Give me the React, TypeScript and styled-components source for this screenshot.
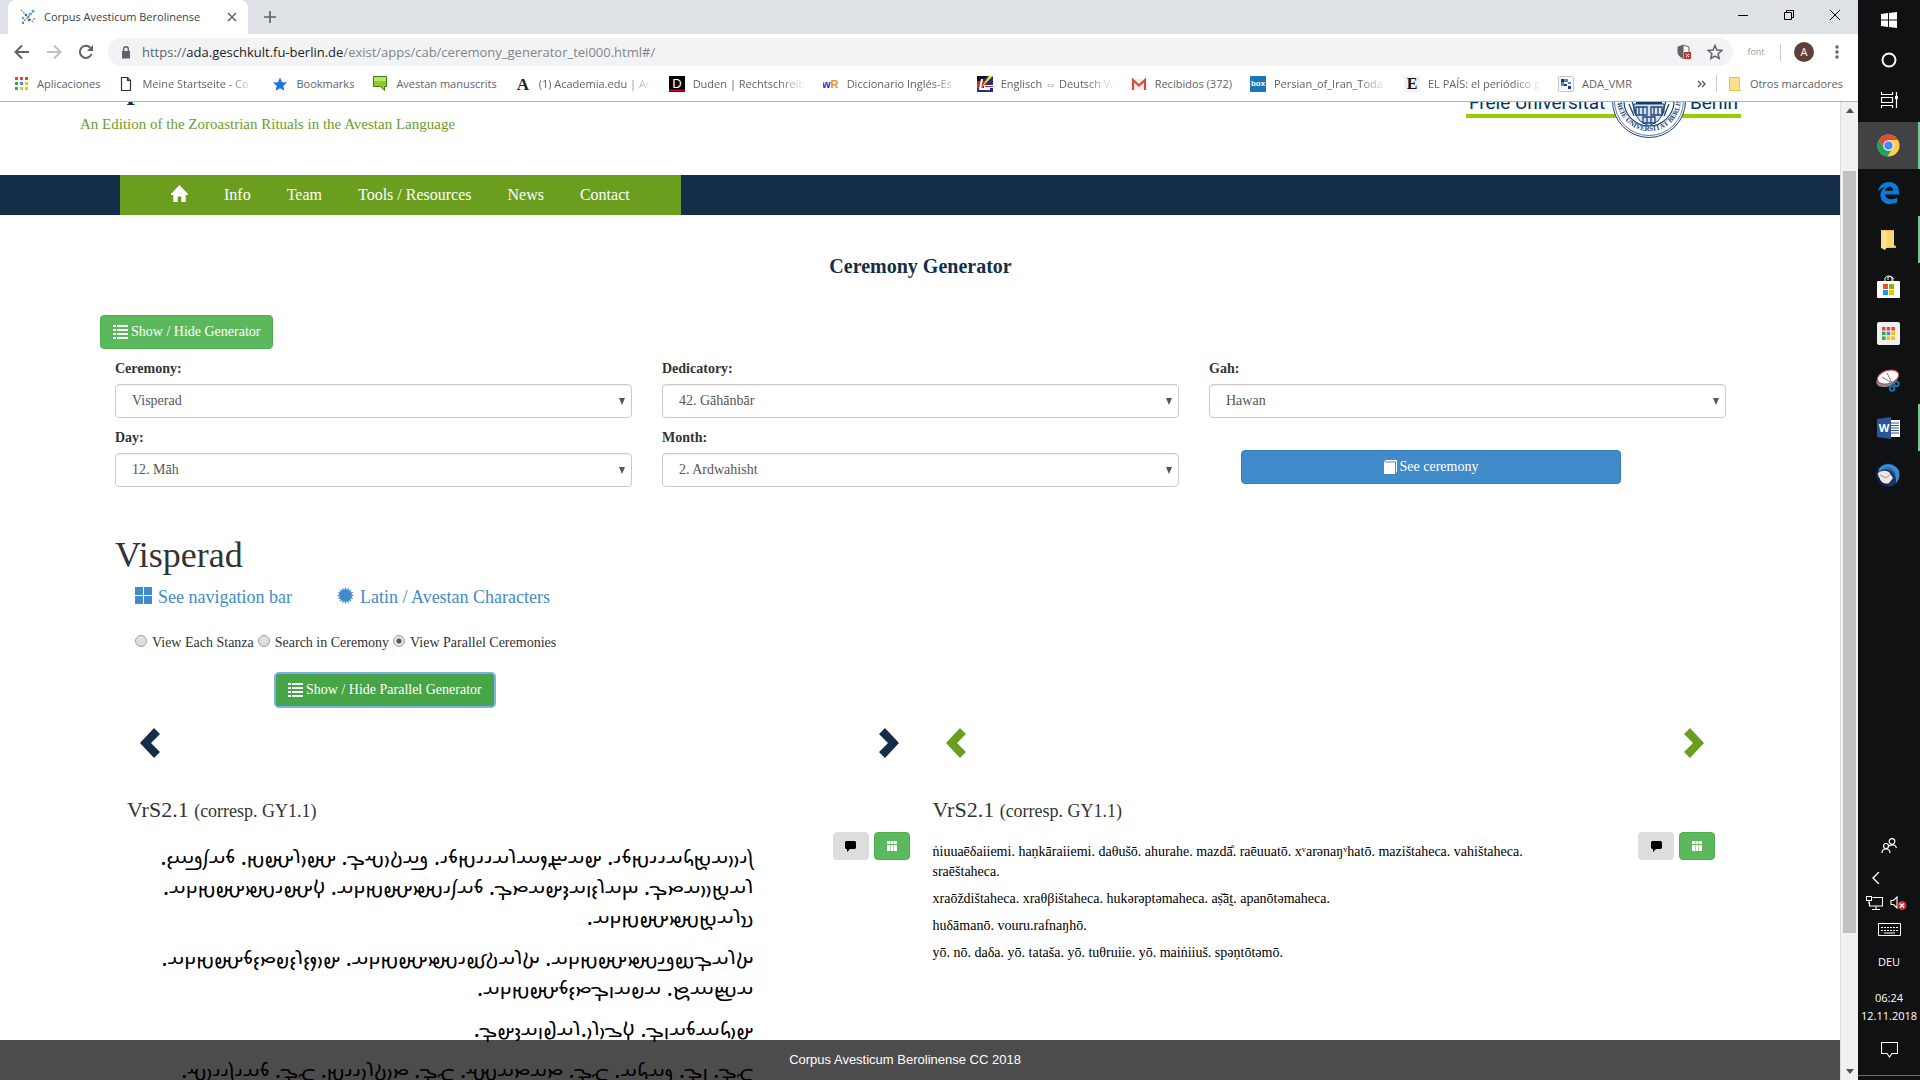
import React from 'react';
import styled, { createGlobalStyle, css } from 'styled-components';

const serif = '"Liberation Serif", "Times New Roman", serif';
const ui = '"Open Sans", "Noto Sans", sans-serif';
const navy = '#142e4a';
const leaf = '#6b9e1f';

const GlobalStyle = createGlobalStyle`
  *, *::before, *::after { box-sizing: border-box; }
  html, body { margin: 0; padding: 0; overflow: hidden; }
  body { font-family: ${serif}; font-size: 14px; line-height: 20px; color: #333; background: #fff; }
  button { font: inherit; margin: 0; cursor: pointer; }
  a { text-decoration: none; }
  svg { display: block; flex: none; }
`;

/* ---------- shell ---------- */

const Desktop = styled.div`
  display: flex;
  height: 100vh;
`;

const Browser = styled.div`
  flex: 1;
  min-width: 0;
  display: flex;
  flex-direction: column;
  font-family: ${ui};
`;

const TabStrip = styled.div`
  display: flex;
  align-items: stretch;
  height: 34px;
  padding-left: 8px;
  background: #dee1e6;
`;

const Tab = styled.div`
  display: flex;
  align-items: center;
  width: 240px;
  padding: 0 10px 0 12px;
  gap: 8px;
  background: #fff;
  border-radius: 8px 8px 0 0;
  font-size: 11px;
  color: #3c4043;
  white-space: nowrap;
  span { flex: 1; }
`;

const BareButton = styled.button`
  display: flex;
  align-items: center;
  justify-content: center;
  padding: 0;
  border: 0;
  background: transparent;
  color: #5f6368;
`;

const NewTab = styled(BareButton)`
  width: 28px;
  margin-left: 8px;
`;

const WindowControls = styled.div`
  display: flex;
  margin-left: auto;
  height: 29px;
  button { width: 46px; color: #000; }
`;

const Toolbar = styled.div`
  display: flex;
  align-items: center;
  height: 36px;
  padding: 0 8px 0 6px;
  background: #fff;
`;

const ToolButton = styled(BareButton)`
  width: 32px;
  height: 28px;
`;

const AddressBar = styled.div`
  flex: 1;
  display: flex;
  align-items: center;
  height: 28px;
  margin: 0 13px 0 6px;
  padding: 0 10px 0 13px;
  gap: 11px;
  border-radius: 14px;
  background: #f1f3f4;
  svg:last-child { margin-left: 4px; }
`;

const Url = styled.a`
  flex: 1;
  font-size: 13px;
  color: #80868b;
  b { font-weight: 400; color: #202124; }
  i { font-style: normal; color: #5f6368; }
`;

const FontBadge = styled.span`
  width: 20px;
  font-size: 9px;
  text-align: center;
  color: #9a9a9a;
`;

const Rule = styled.span`
  width: 1px;
  height: 17px;
  background: #c9cbce;
`;

const Avatar = styled.button`
  width: 20px;
  height: 20px;
  padding: 0;
  border: 0;
  border-radius: 50%;
  background: #5d4037;
  color: #fff;
  font-size: 11px;
  line-height: 20px;
`;

const BookmarkBar = styled.nav`
  display: flex;
  align-items: center;
  height: 32px;
  padding: 0 15px 4px 13px;
  border-bottom: 1px solid #b3b3b5;
  background: #fff;
`;

const Bookmark = styled.a<{ $cut?: boolean }>`
  flex: none;
  display: flex;
  align-items: center;
  gap: 8px;
  margin-right: ${p => (p.$cut ? 17 : 18)}px;
  font-size: 11px;
  color: #5f6368;
  white-space: nowrap;
  ${p => p.$cut && css`
    span {
      overflow: hidden;
      width: 113px;
      mask-image: linear-gradient(to right, #000 86px, transparent 113px);
    }
  `}
`;

const BarEnd = styled.div`
  display: flex;
  align-items: center;
  margin-left: auto;
  gap: 9px;
  a { margin: 0; }
`;

const Viewport = styled.div`
  flex: 1;
  min-height: 0;
  display: flex;
`;

const ScrollTrack = styled.div`
  display: flex;
  flex-direction: column;
  align-items: center;
  justify-content: space-between;
  width: 18px;
  padding: 6px 0;
  border-left: 1px solid #dcdcdc;
  background: #f1f1f1;
`;

const ScrollThumb = styled.div`
  flex: 0 1 762px;
  width: 13px;
  margin: 58px 0 auto;
  background: #c1c1c1;
`;

/* ---------- web page ---------- */

const Page = styled.div`
  position: relative;
  flex: 1;
  min-width: 0;
  overflow: hidden;
  font-family: ${serif};
  background: #fff;
`;

const Masthead = styled.header`
  display: flex;
  justify-content: space-between;
  height: 103px;
  margin-top: -30px;
  padding: 0 99px 0 80px;
`;

const SiteTitle = styled.h1`
  margin: 0;
  font-size: 28px;
  font-weight: 700;
  line-height: 36px;
  color: ${navy};
`;

const Tagline = styled.p`
  margin: 6px 0 0;
  font-size: 15px;
  color: ${leaf};
`;

const Sponsor = styled.div`
  display: flex;
  justify-content: space-between;
  position: relative;
  width: 275px;
  height: 46px;
  padding: 16px 3px 0;
  border-bottom: 4px solid #99cc00;
  font-family: Roboto, ${ui};
  font-size: 19px;
  line-height: 30px;
  color: #003366;
  svg { position: absolute; left: 146px; top: -8px; }
`;

const SiteNav = styled.nav`
  padding-left: 120px;
  background: ${navy};
`;

const NavList = styled.div`
  display: flex;
  align-items: center;
  width: max-content;
  height: 40px;
  padding: 0 51px;
  gap: 36px;
  background: ${leaf};
  font-size: 16px;
  a { color: #fff; }
  svg { margin-top: -4px; }
`;

const Main = styled.main`
  padding: 40px 99px 0 100px;
`;

const PageTitle = styled.h2`
  margin: 0 0 38px;
  font-size: 20px;
  line-height: 22px;
  text-align: center;
  color: ${navy};
`;

const tones = {
  green: css`background: #5cb85c; border-color: #4cae4c; color: #fff;`,
  pressed: css`background: #47a447; border-color: #398439; color: #fff; outline: 2px solid #7aaef0; outline-offset: -1px;`,
  blue: css`background: #428bca; border-color: #357ebd; color: #fff;`,
  grey: css`background: #ddd; border-color: #ddd; color: #000;`,
};

const Button = styled.button<{ $tone: keyof typeof tones; $small?: boolean }>`
  display: inline-flex;
  align-items: center;
  justify-content: center;
  gap: 3px;
  height: ${p => (p.$small ? 28 : 34)}px;
  padding: 0 12px;
  border: 1px solid;
  border-radius: 4px;
  ${p => tones[p.$tone]}
`;

const Generator = styled.form`
  display: grid;
  grid-template-columns: repeat(3, 1fr);
  gap: 10px 30px;
  padding: 10px 15px 0;
`;

const Field = styled.div`
  display: grid;
  gap: 5px;
  label { font-weight: 700; }
`;

const SelectBox = styled.div`
  display: grid;
  align-items: center;
  > * { grid-area: 1 / 1; }
  svg { justify-self: end; margin-right: 7px; pointer-events: none; }
`;

const Select = styled.select`
  appearance: none;
  width: 100%;
  height: 34px;
  padding: 0 16px;
  border: 1px solid #ccc;
  border-radius: 4px;
  background: #fff;
  box-shadow: inset 0 1px 1px rgba(0, 0, 0, 0.075);
  font: inherit;
  color: #555;
`;

const SubmitCell = styled.div`
  padding: 22px 105px 0 32px;
  button { width: 100%; }
`;

const CeremonyName = styled.h1`
  margin: 48px 0 12px;
  font-size: 36px;
  font-weight: 400;
  line-height: 40px;
`;

const Ceremony = styled.section`
  padding-left: 15px;
`;

const ViewLinks = styled.div`
  display: flex;
  gap: 45px;
  padding-left: 20px;
  font-size: 18px;
  a { display: flex; align-items: center; gap: 6px; color: #428bca; }
  svg { margin-top: -3px; }
`;

const Modes = styled.div`
  display: flex;
  align-items: center;
  gap: 4px;
  padding: 26px 0 20px 20px;
  label { margin-left: 1px; }
`;

const Radio = styled.input`
  appearance: none;
  width: 12px;
  height: 12px;
  margin: 0 0 4px;
  border: 1px solid #a2a2a2;
  border-radius: 50%;
  background: linear-gradient(#e4e4e4, #dadada);
  &:checked { background: radial-gradient(circle, #555 0 2px, #e2e2e2 3px); }
`;

const ParallelToggle = styled.div`
  padding-left: 160px;
`;

const Parallel = styled.div`
  display: grid;
  grid-template-columns: 1fr 1fr;
  gap: 23px;
  padding: 21px 26px 0 27px;
`;

const Arrows = styled.div<{ $color: string }>`
  display: flex;
  justify-content: space-between;
  padding: 0 11px 0 13px;
  button { color: ${p => p.$color}; }
`;

const StanzaTitle = styled.h3`
  margin: 40px 0 9px;
  font-size: 22px;
  font-weight: 400;
  line-height: 24px;
  small { font-size: 18px; }
`;

const StanzaBody = styled.div`
  display: flex;
  align-items: flex-start;
  gap: 5px;
  button { width: 36px; padding: 0; }
`;

const Stanza = styled.div<{ $avestan?: boolean }>`
  flex: 1;
  min-width: 0;
  padding-top: 10px;
  margin-right: 74px;
  color: #000;
  p { margin: 0 0 7px; }
  ${p => p.$avestan && css`
    direction: rtl;
    font-family: "Noto Sans Avestan", "Ahuramazda", ${serif};
    font-size: 21px;
    line-height: 30px;
    white-space: nowrap;
    p { margin: 0 0 11px; }
  `}
`;

const Footer = styled.footer`
  position: absolute;
  left: 0;
  right: 0;
  bottom: 0;
  height: 40px;
  padding-right: 30px;
  background: rgba(0, 0, 0, 0.7);
  font-family: "Liberation Sans", Arial, sans-serif;
  font-size: 13px;
  line-height: 40px;
  text-align: center;
  color: #fff;
`;

/* ---------- windows taskbar ---------- */

const Taskbar = styled.aside`
  display: flex;
  flex-direction: column;
  width: 62px;
  background: #101113;
  color: #fff;
  font-family: ${ui};
  font-size: 11px;
  line-height: 18px;
  text-align: center;
`;

const SystemButton = styled(BareButton)`
  height: 40px;
  color: #fff;
`;

const AppButton = styled(BareButton)<{ $active?: boolean; $open?: boolean }>`
  height: 47px;
  background: ${p => (p.$active ? '#404244' : 'transparent')};
  border-right: 2px solid ${p => (p.$open ? '#76c893' : 'transparent')};
`;

const Apps = styled.div`
  display: grid;
  padding-top: 2px;
`;

const Tray = styled.div`
  display: flex;
  flex-direction: column;
  align-items: center;
  margin-top: auto;
  padding-bottom: 4px;
`;

const TrayRow = styled.div<{ $h: number; $left?: boolean }>`
  display: flex;
  align-items: center;
  justify-content: center;
  width: 100%;
  height: ${p => p.$h}px;
  padding-right: ${p => (p.$left ? 5 : 0)}px;
  gap: 7px;
`;

const Clock = styled.time`
  padding-top: 11px;
`;

const ShowDesktop = styled.div`
  width: 100%;
  border-top: 1px solid #6d6e70;
`;

/* ---------- icons ---------- */

type P = { w?: number; h?: number; vb?: string; children?: React.ReactNode };
const Svg = ({ w = 16, h, vb, children }: P) => (
  <svg width={w} height={h ?? w} viewBox={vb ?? `0 0 ${w} ${h ?? w}`} aria-hidden="true">{children}</svg>
);
const stroke = (width: number) => ({ fill: 'none', stroke: 'currentColor', strokeWidth: width });

const ListIcon = () => (
  <Svg w={15} h={14}>
    <path fill="currentColor" d="M0 0h3v2H0zM4 0h11v2H4zM0 4h3v2H0zM4 4h11v2H4zM0 8h3v2H0zM4 8h11v2H4zM0 12h3v2H0zM4 12h11v2H4z" />
  </Svg>
);
const HomeIcon = () => (
  <Svg w={17} h={17}><path fill="currentColor" d="M8.500 0 17 9v1h-2.300v7h-4.400v-5.500H6.700V17H2.300v-7H0V9z" /></Svg>
);
const BookIcon = () => (
  <Svg w={13} h={14}>
    <path fill="currentColor" d="M2 0h10.500c.300 0 .500.200.500.500V12l-1 1V1.500H1.500L1 2.500h10V14H.500A.500.500 0 0 1 0 13.500V2z" />
  </Svg>
);
const WindowsGridIcon = () => (
  <Svg w={17} h={17}><path fill="currentColor" d="M0 0h8v8H0zM9 0h8v8H9zM0 9h8v8H0zM9 9h8v8H9z" /></Svg>
);
const burst = Array.from({ length: 32 }, (_, i) => {
  const r = i % 2 ? 5.8 : 8.5;
  const a = (i * Math.PI) / 16;
  return `${(8.5 + r * Math.sin(a)).toFixed(2)},${(8.5 - r * Math.cos(a)).toFixed(2)}`;
}).join(' ');
const BurstIcon = () => <Svg w={17} h={17}><polygon fill="currentColor" points={burst} /></Svg>;
const Chevron = ({ right }: { right?: boolean }) => (
  <Svg w={20} h={30}>
    <path fill="currentColor" d={right ? 'M6 0 20 15 6 30 0 24 9 15 0 6z' : 'M14 0 20 6 11 15 20 24 14 30 0 15z'} />
  </Svg>
);
const CommentIcon = () => (
  <Svg w={11} h={11}><path fill="currentColor" d="M1 0h9l1 1v6L10 8H5L2 11V8H1L0 7V1z" /></Svg>
);
const TableIcon = () => (
  <Svg w={10} h={10}><path fill="currentColor" d="M0 0h3v3H0zM3.500 0h3v3h-3zM7 0h3v3H7zM0 4h3v6H0zM3.500 4h3v6h-3zM7 4h3v6H7z" /></Svg>
);
const Caret = () => <Svg w={6} h={7}><path fill="#555" d="M0 0h6L3 7z" /></Svg>;

const Favicon = () => (
  <Svg>
    <g stroke="#7b8086" strokeWidth="1.200" strokeDasharray="2 1"><path d="M1 1l13 13M14 2 2 14" /></g>
    <g fill="#4aa8e0"><circle cx="13" cy="2" r="1.500" /><circle cx="3" cy="9" r="1.300" /><circle cx="10" cy="5" r="1.300" /><circle cx="14" cy="10" r="1" /></g>
    <g fill="#5f6368"><circle cx="6" cy="6" r="1.300" /><circle cx="9" cy="11" r="1.300" /><circle cx="3" cy="14" r="1" /></g>
  </Svg>
);
const gridColors = ['#ea4335', '#ea4335', '#ea4335', '#34a853', '#4285f4', '#fbbc04', '#34a853', '#fbbc04', '#fbbc04'];
const GoogleGrid = ({ s = 3, step = 5 }: { s?: number; step?: number }) => (
  <>{gridColors.map((c, i) => <rect key={i} x={(i % 3) * step} y={Math.floor(i / 3) * step} width={s} height={s} fill={c} />)}</>
);
const TileText = ({ bg, fg, t, size, font = 'Liberation Sans', y = 12 }: { bg: string; fg: string; t: string; size: number; font?: string; y?: number }) => (
  <Svg>
    <rect width="16" height="16" rx="1" fill={bg} />
    <text x="8" y={y} fontSize={size} fontWeight="700" fontFamily={font} textAnchor="middle" fill={fg}>{t}</text>
  </Svg>
);

const Seal = () => (
  <Svg w={74} h={74} vb="0 0 74 74">
    <circle cx="37" cy="37" r="36.500" fill="#fff" stroke="#1c4478" />
    <circle cx="37" cy="37" r="34.500" fill="none" stroke="#1c4478" strokeWidth=".7" />
    <circle cx="37" cy="37" r="25" fill="#fff" stroke="#1c4478" strokeWidth="1.200" />
    <path id="sealArc" d="M5 35a32 32 0 0 0 64 0" fill="none" />
    <text fontSize="7" fontFamily="Liberation Serif" fontWeight="700" fill="#1c4478">
      <textPath href="#sealArc" startOffset="50%" textAnchor="middle">FREIE UNIVERSITÄT BERLIN</textPath>
    </text>
    <path d="M24 32h26v9H24z" fill="#0e3567" />
    <path d="M22 40h30v8l-6 9-9 5-9-5-6-9z" fill="#d7e0ec" stroke="#1c4478" />
    <g fill="none" stroke="#1c4478" strokeWidth="1.300">
      <path d="M24 43h11v8H24zM39 43h11v8H39zM31 53h12v6H31zM27 43v8M31 43v8M42 43v8M46 43v8M35 53v6M39 53v6M17 40l5 12M20 37l4 14M57 40l-5 12M54 37l-4 14" />
    </g>
  </Svg>
);

/* ---------- Avestan script ---------- */

const LETTERS = [
  'a', 'ā', 'å', 'ā̊', 'ą', 'ą̇', 'ə', 'ə̄', 'e', 'ē', 'o', 'ō', 'i', 'ī', 'u', 'ū', 'k', 'x', 'x́', 'xᵛ', 'g', 'ġ', 'γ',
  'c', 'j', 't', 'θ', 'd', 'δ', 't̰', 'p', 'f', 'b', 'β', 'ŋ', 'ŋ́', 'ŋᵛ', 'n', 'ń', 'ṇ', 'm', 'm̨', 'ẏ', 'y', 'v', 'r', 'l',
  's', 'z', 'š', 'ž', 'š́', 'ṣ̌', 'h',
];
const BY_LENGTH = LETTERS.map((l, i) => [l, String.fromCodePoint(0x10b00 + i)] as const)
  .sort((a, b) => b[0].length - a[0].length);

const toAvestan = (latin: string) => {
  let rest = latin;
  let out = '';
  while (rest) {
    const hit = BY_LENGTH.find(([l]) => rest.startsWith(l));
    out += hit ? hit[1] : rest[0];
    rest = rest.slice(hit ? hit[0].length : 1);
  }
  return out;
};

const avestanText = [
  ['ńiuuaēδaiiemi. haṇkāraiiemi. daθušō. ahurahe. mazdā̊.', 'raēuuatō. xᵛarənaŋᵛhatō. mazištaheca. vahištaheca.', 'sraēštaheca.'],
  ['xraōždištaheca. xraθβištaheca. hukərəptəmaheca.', 'aṣ̌āt̰. apanōtəmaheca.'],
  ['huδāmanō. vouru.rafnaŋhō.'],
  ['ẏō. nō. daδa. ẏō. tataša. ẏō. tuθruiie. ẏō. maińiiuš.'],
];
const latinText = [
  'ṅiuuaēδaiiemi. haṇkāraiiemi. daθušō. ahurahe. mazdā̊. raēuuatō. xᵛarənaŋᵛhatō. mazištaheca. vahištaheca. sraēštaheca.',
  'xraōždištaheca. xraθβištaheca. hukərəptəmaheca. aṣ̌āt̰. apanōtəmaheca.',
  'huδāmanō. vouru.rafnaŋhō.',
  'yō. nō. daδa. yō. tataša. yō. tuθruiie. yō. maiṅiiuš. spəṇtōtəmō.',
];

/* ---------- composition ---------- */

const fields = [
  ['Ceremony:', 'Visperad'], ['Dedicatory:', '42. Gāhānbār'], ['Gah:', 'Hawan'], ['Day:', '12. Māh'], ['Month:', '2. Ardwahisht'],
];

const bookmarks: { icon: React.ReactNode; text: string; cut?: boolean }[] = [
  { text: 'Aplicaciones', icon: <Svg vb="-2 -1 16 16"><GoogleGrid /></Svg> },
  { text: 'Meine Startseite - Co', cut: true, icon: <Svg><path d="M3.500 1.500h6l3 3v10h-9zM9.500 1.500v3h3" fill="none" stroke="#333" strokeWidth="1.200" /></Svg> },
  { text: 'Bookmarks', icon: <Svg><path fill="#1a73e8" d="m8 1.500 2 4.700 5 .4-3.800 3.300 1.200 4.900L8 12.200l-4.400 2.600 1.200-4.900L1 6.600l5-.4z" /></Svg> },
  { text: 'Avestan manuscrits', icon: <Svg><path fill="#8ecb2c" stroke="#3d7d0c" d="M1.500.500h13v10h-2v4l-4-4h-7z" /><path fill="#b9e36b" d="M2 1h12v4H2z" /></Svg> },
  { text: '(1) Academia.edu | Ar', cut: true, icon: <TileText bg="transparent" fg="#222" t="A" size={17} font="Liberation Serif" y={14} /> },
  { text: 'Duden | Rechtschreib', cut: true, icon: <Svg><path fill="#000" d="M0 0h16v16H0z" /><path fill="#e2001a" d="M0 13.500h16V15H0z" /><text x="8" y="12" fontSize="13" fontFamily="Liberation Sans" textAnchor="middle" fill="#fff">D</text></Svg> },
  { text: 'Diccionario Inglés-Es', cut: true, icon: <Svg><text x="-1" y="12" fontSize="11" fontWeight="700" fontFamily="Liberation Sans" fill="#2a2ad0">w<tspan fill="#e8912d">R</tspan></text></Svg> },
  { text: 'Englisch ⇔ Deutsch W', cut: true, icon: <Svg><path fill="#1d2f86" d="M0 0h16v16H0z" /><path fill="#fff" d="M7 9h9v3H7z" /><path fill="#d22" d="M0 5h10L5 12H0zM8 10h8v1H8z" /><path fill="#111" d="M0 0h10L4 5H0z" /><path fill="#ffd400" d="M16 0 8 8 3 14 9 4l3-4z" /><path d="M5 3 3 13h10" fill="none" stroke="#fff" strokeWidth="2" /></Svg> },
  { text: 'Recibidos (372)', icon: <Svg><path fill="#f1f1f1" d="M1 3h14v11H1z" /><path d="M2 14V4l6 5.500L14 4v10" fill="none" stroke="#d54b3d" strokeWidth="2.200" /></Svg> },
  { text: 'Persian_of_Iran_Toda', cut: true, icon: <TileText bg="#1a75bc" fg="#fff" t="box" size={8} y={10} /> },
  { text: 'EL PAÍS: el periódico g', cut: true, icon: <TileText bg="#f2f2f2" fg="#111" t="E" size={16} font="Liberation Serif" y={13} /> },
  { text: 'ADA_VMR', icon: <Svg><rect x=".5" y=".5" width="15" height="15" rx="1" fill="#f6f8fa" stroke="#c2c6ca" /><path fill="#1b3c6e" d="M3 3h3v3H3zM10 10h3v3h-3zM6 8h3v2H6z" /><path fill="#4c86c6" d="M6 3h4v3H6zM3 6h3v4H3zM10 6h3v2h-3z" /></Svg> },
];

const ChromeIcon = () => (
  <Svg w={23} vb="0 0 24 24">
    <circle cx="12" cy="12" r="11.500" fill="#fdd04b" />
    <path fill="#db4c3f" d="M12 .5A11.500 11.500 0 0 1 22 6.300H12l-5 8.500L2 6.300A11.500 11.500 0 0 1 12 .5z" />
    <path fill="#1da362" d="M2 6.200 7.200 15l4.800 2.500 3-1-4 7A11.500 11.500 0 0 1 2 6.200z" />
    <circle cx="12" cy="12" r="5.500" fill="#f2f2f2" /><circle cx="12" cy="12" r="4.300" fill="#4688f1" />
  </Svg>
);
const EdgeIcon = () => (
  <Svg w={21} h={22} vb="0 0 21 22">
    <path fill="#0a7bdc" d="M0 9.500C.8 4 5 0 11 0c6.500 0 10 4.600 10 10v2.500H7c.2 3.200 3 4.800 6.200 4.800 2.200 0 4.500-.7 6-1.700v4.700C17.500 21.400 15 22 12 22c-6 0-9.500-3.800-9.500-8.800 0-3.500 1.800-6.500 5-8C4.500 5.500 1.700 7 0 9.500zM7.200 8.800h8c0-2.600-1.300-4-3.900-4-2.300 0-3.800 1.700-4.100 4z" />
  </Svg>
);
const FolderIcon = () => (
  <Svg w={18} h={20}><path fill="#e9bf55" d="M4 0h11v15l2 1v2H4z" /><path fill="#fbe08d" d="M2 0l6 1v16l-2 3-4-2z" /><path fill="#f6d673" d="M8 1h7v16H8z" /></Svg>
);
const StoreIcon = () => (
  <Svg w={23} h={23}>
    <path d="M8 7V3q3.500-4 7 0v4M11 5V2q3-2 5 1v3" fill="none" stroke="#fff" />
    <rect y="6" width="23" height="17" rx="1" fill="#fff" />
    <path fill="#f25022" d="M6 9h5v5H6z" /><path fill="#7fba00" d="M12 9h5v5h-5z" /><path fill="#00a4ef" d="M6 15h5v5H6z" /><path fill="#ffb900" d="M12 15h5v5h-5z" />
  </Svg>
);
const LauncherIcon = () => (
  <Svg w={23}><rect width="23" height="23" rx="2" fill="#efefef" /><g transform="translate(5 5)"><GoogleGrid s={3.5} step={4.7} /></g></Svg>
);
const SnipIcon = () => (
  <Svg w={24} h={23}>
    <ellipse cx="11" cy="11" rx="11" ry="6.500" fill="#8a8d90" transform="rotate(-18 11 11)" />
    <ellipse cx="12" cy="8" rx="11" ry="6.500" fill="#fff" stroke="#d23b35" transform="rotate(-18 12 8)" />
    <path d="M11 4l5 10M6 8l10 6" stroke="#777" fill="none" />
    <g fill="none" stroke="#1778b8" strokeWidth="1.700"><circle cx="20.500" cy="15" r="2.300" /><circle cx="16" cy="19.500" r="2.300" /></g>
  </Svg>
);
const WordIcon = () => (
  <Svg w={23} h={22}>
    <path fill="#fff" d="M13 3h10v17H13z" />
    <path d="M14 6h8M14 8.500h8M14 11h8M14 13.500h8M14 16h8" stroke="#2b579a" fill="none" />
    <path fill="#2b579a" d="M0 2 14 0v22L0 20z" />
    <text x="7" y="15" fontSize="11" fontWeight="700" fontFamily="Open Sans" textAnchor="middle" fill="#fff">W</text>
  </Svg>
);
const BirdIcon = () => (
  <Svg w={24}>
    <circle cx="12" cy="12" r="11.500" fill="#15356c" />
    <path fill="#3d8cc9" d="M3 6C8-1 19 0 23 8c1 5 0 9-3 12 1-7-3-13-10-14-3 0-5 1-7 3z" />
    <path fill="#1f5ea5" d="M8 4q9-1 12 8l-2-1Q14 5 8 4z" />
    <path fill="#ece7df" d="M2 10q5-4 11-1l4 6-4 5q-7 2-10-4z" />
    <path d="m4 12 6 3 5-4" stroke="#9a958c" fill="none" /><path d="M2 14q2 7 9 9" stroke="#0b1f49" strokeWidth="2" fill="none" />
  </Svg>
);

const StanzaActions = () => (
  <>
    <Button $tone="grey" $small aria-label="Comment"><CommentIcon /></Button>
    <Button $tone="green" $small aria-label="Table"><TableIcon /></Button>
  </>
);

export default function App() {
  return (
    <Desktop>
      <GlobalStyle />
      <Browser>
        <TabStrip>
          <Tab>
            <Favicon />
            <span>Corpus Avesticum Berolinense</span>
            <BareButton aria-label="Close tab"><Svg w={12}><path d="m2 2 8 8M10 2l-8 8" {...stroke(1.5)} /></Svg></BareButton>
          </Tab>
          <NewTab aria-label="New tab"><Svg w={12}><path d="M6 0v12M0 6h12" {...stroke(1.7)} /></Svg></NewTab>
          <WindowControls>
            <BareButton aria-label="Minimise"><Svg w={10}><path d="M0 5.500h10" {...stroke(1)} /></Svg></BareButton>
            <BareButton aria-label="Restore"><Svg w={10}><path d="M.5 2.500h7v7h-7zM2.500 2.500v-2h7v7h-2" {...stroke(1)} /></Svg></BareButton>
            <BareButton aria-label="Close"><Svg w={10}><path d="m0 0 10 10M10 0 0 10" {...stroke(1)} /></Svg></BareButton>
          </WindowControls>
        </TabStrip>
        <Toolbar>
          <ToolButton aria-label="Back"><Svg><path d="M15 8H2M8 1.500 1.500 8 8 14.500" {...stroke(2)} /></Svg></ToolButton>
          <ToolButton aria-label="Forward"><Svg><path d="M1 8h13M8 1.500 14.500 8 8 14.500" fill="none" stroke="#bdc1c6" strokeWidth="2" /></Svg></ToolButton>
          <ToolButton aria-label="Reload"><Svg><path d="M13.500 10A6 6 0 1 1 12.300 3.800" {...stroke(2)} /><path fill="currentColor" d="M15 1v6H9z" /></Svg></ToolButton>
          <AddressBar>
            <Svg w={10} h={13}><path fill="#5f6368" d="M1 5h8v7.500H1z" /><path d="M2.700 5V3a2.300 2.300 0 0 1 4.600 0v2" fill="none" stroke="#5f6368" strokeWidth="1.400" /></Svg>
            <Url href="#/"><i>https://</i><b>ada.geschkult.fu-berlin.de</b>/exist/apps/cab/ceremony_generator_tei000.html#/</Url>
            <Svg><path d="M7.500 1 13 3v5c0 3-2.500 5-5.500 6.500C4 13 2 11 2 8V3z" fill="none" stroke="#5f6368" /><path fill="#5f6368" d="M7.500 1v13.500C4 13 2 11 2 8V3z" /><path fill="#d93025" d="M8 8h7v7H8z" /><path d="m10 10 3 3m0-3-3 3" stroke="#fff" /></Svg>
            <Svg><path d="m8 1.500 1.900 4.600 4.900.4-3.700 3.200 1.100 4.800L8 12l-4.200 2.500 1.100-4.800-3.700-3.200 4.900-.4z" fill="none" stroke="#5f6368" strokeWidth="1.500" /></Svg>
          </AddressBar>
          <FontBadge>font</FontBadge>
          <Svg w={28} h={17}><path d="M14.500 0v17" stroke="#c9cbce" /></Svg>
          <Avatar aria-label="Profile">A</Avatar>
          <Svg w={36} h={16}><g fill="#5f6368"><circle cx="23" cy="3" r="1.700" /><circle cx="23" cy="8" r="1.700" /><circle cx="23" cy="13" r="1.700" /></g></Svg>
        </Toolbar>
        <BookmarkBar>
          {bookmarks.map(b => (
            <Bookmark key={b.text} href="#/" $cut={b.cut}>{b.icon}<span>{b.text}</span></Bookmark>
          ))}
          <BarEnd>
            <Svg w={10}><path d="m1 2 3 3-3 3m4-6 3 3-3 3" {...stroke(1.5)} stroke="#5f6368" /></Svg>
            <Rule />
            <Bookmark href="#/"><Svg><path fill="#fce08a" stroke="#e6bd4a" d="M3.500 1.500h10v11l1 2h-11z" /></Svg><span>Otros marcadores</span></Bookmark>
          </BarEnd>
        </BookmarkBar>

        <Viewport>
          <Page>
            <Masthead>
              <div>
                <SiteTitle>Corpus Avesticum Berolinense</SiteTitle>
                <Tagline>An Edition of the Zoroastrian Rituals in the Avestan Language</Tagline>
              </div>
              <Sponsor><span>Freie Universität</span><Seal /><span>Berlin</span></Sponsor>
            </Masthead>
            <SiteNav>
              <NavList>
                <a href="#/" aria-label="Home"><HomeIcon /></a>
                {['Info', 'Team', 'Tools / Resources', 'News', 'Contact'].map(t => <a key={t} href="#/">{t}</a>)}
              </NavList>
            </SiteNav>
            <Main>
              <PageTitle>Ceremony Generator</PageTitle>
              <Button $tone="green"><ListIcon />Show / Hide Generator</Button>
              <Generator onSubmit={e => e.preventDefault()}>
                {fields.map(([label, value]) => (
                  <Field key={label}>
                    <label htmlFor={label}>{label}</label>
                    <SelectBox>
                      <Select id={label}><option>{value}</option></Select>
                      <Caret />
                    </SelectBox>
                  </Field>
                ))}
                <SubmitCell><Button $tone="blue" type="submit"><BookIcon />See ceremony</Button></SubmitCell>
              </Generator>

              <Ceremony>
                <CeremonyName>Visperad</CeremonyName>
                <ViewLinks>
                  <a href="#/"><WindowsGridIcon />See navigation bar</a>
                  <a href="#/"><BurstIcon />Latin / Avestan Characters</a>
                </ViewLinks>
                <Modes>
                  {['View Each Stanza', 'Search in Ceremony', 'View Parallel Ceremonies'].map((t, i) => (
                    <React.Fragment key={t}>
                      <Radio type="radio" name="mode" id={`mode${i}`} defaultChecked={i === 2} />
                      <label htmlFor={`mode${i}`}>{t}</label>
                    </React.Fragment>
                  ))}
                </Modes>
                <ParallelToggle><Button $tone="pressed"><ListIcon />Show / Hide Parallel Generator</Button></ParallelToggle>
              </Ceremony>

              <Parallel>
                {[navy, leaf].map((color, side) => (
                  <article key={color}>
                    <Arrows $color={color}>
                      <BareButton aria-label="Previous"><Chevron /></BareButton>
                      <BareButton aria-label="Next"><Chevron right /></BareButton>
                    </Arrows>
                    <StanzaTitle>VrS2.1 <small>(corresp. GY1.1)</small></StanzaTitle>
                    <StanzaBody>
                      {side === 0 ? (
                        <Stanza $avestan lang="ae">
                          {avestanText.map(lines => (
                            <p key={lines[0]}>{lines.map(l => <React.Fragment key={l}>{toAvestan(l)}<br /></React.Fragment>)}</p>
                          ))}
                        </Stanza>
                      ) : (
                        <Stanza>{latinText.map(t => <p key={t}>{t}</p>)}</Stanza>
                      )}
                      <StanzaActions />
                    </StanzaBody>
                  </article>
                ))}
              </Parallel>
            </Main>
            <Footer>Corpus Avesticum Berolinense CC 2018</Footer>
          </Page>
          <ScrollTrack>
            <Svg w={8} h={5}><path fill="#505050" d="M4 0 8 5H0z" /></Svg>
            <ScrollThumb />
            <Svg w={8} h={5}><path fill="#505050" d="M0 0h8L4 5z" /></Svg>
          </ScrollTrack>
        </Viewport>
      </Browser>

      <Taskbar>
        <SystemButton aria-label="Start"><Svg w={16}><path fill="#fff" d="m0 2 7-1v6.500H0zM8 1l8-1v7.500H8zM0 8.500h7V15l-7-1zM8 8.500h8V16l-8-1z" /></Svg></SystemButton>
        <SystemButton aria-label="Cortana"><Svg w={16}><circle cx="8" cy="8" r="6.500" {...stroke(2)} /></Svg></SystemButton>
        <SystemButton aria-label="Task view"><Svg w={17} h={16}><path d="M.5 0v2.500h11V0M.5 16v-2.500h11V16M.5 5.500h11v5H.5zM15.500 0v16" {...stroke(1.2)} /><path fill="#fff" d="M14 4h3v3h-3z" /></Svg></SystemButton>
        <Apps>
          <AppButton $active $open aria-label="Chrome"><ChromeIcon /></AppButton>
          <AppButton aria-label="Edge"><EdgeIcon /></AppButton>
          <AppButton $open aria-label="Explorer"><FolderIcon /></AppButton>
          <AppButton aria-label="Store"><StoreIcon /></AppButton>
          <AppButton aria-label="App launcher"><LauncherIcon /></AppButton>
          <AppButton aria-label="Snipping tool"><SnipIcon /></AppButton>
          <AppButton $open aria-label="Word"><WordIcon /></AppButton>
          <AppButton aria-label="Thunderbird"><BirdIcon /></AppButton>
        </Apps>
        <Tray>
          <TrayRow $h={32}><Svg w={16}><g {...stroke(1.2)}><circle cx="11" cy="3.500" r="2.800" /><circle cx="5" cy="8" r="2.500" /><path d="M1 15q0-4 4-4t4 4M8 8q6-3 7.500 2" /></g></Svg></TrayRow>
          <TrayRow $h={32} $left><Svg w={36} h={12}><path d="M10 0 4 6l6 6" {...stroke(1.4)} /></Svg></TrayRow>
          <TrayRow $h={18} $left>
            <Svg w={17} h={14}><path d="M3.500 6v4h13V1.500h-10M6 13.500h8M10 10v3M.500.500h5v4h-5zM3 4.500V8" {...stroke(1.1)} /></Svg>
            <Svg w={17} h={14}><path d="M1 4.500h2.500L7 1v11L3.500 8.500H1z" {...stroke(1.1)} /><circle cx="12" cy="9.500" r="4.500" fill="#e02b35" /><path d="m10 7.500 4 4m0-4-4 4" stroke="#fff" strokeWidth="1.300" /></Svg>
          </TrayRow>
          <TrayRow $h={34}><Svg w={23} h={13}><path d="M.5.500h22v12H.500z" {...stroke(1)} /><path d="M3 4.500h18M3 7.500h18" {...stroke(1)} strokeDasharray="2 1" /><path d="M6 10h11" {...stroke(1)} /></Svg></TrayRow>
          <TrayRow $h={32}>DEU</TrayRow>
          <Clock>06:24<br />12.11.2018</Clock>
          <TrayRow $h={50}><Svg w={17} h={16}><path d="M.5.500h16v11H11L8.500 15 6 11.500H.500z" {...stroke(1.1)} /></Svg></TrayRow>
          <ShowDesktop />
        </Tray>
      </Taskbar>
    </Desktop>
  );
}
